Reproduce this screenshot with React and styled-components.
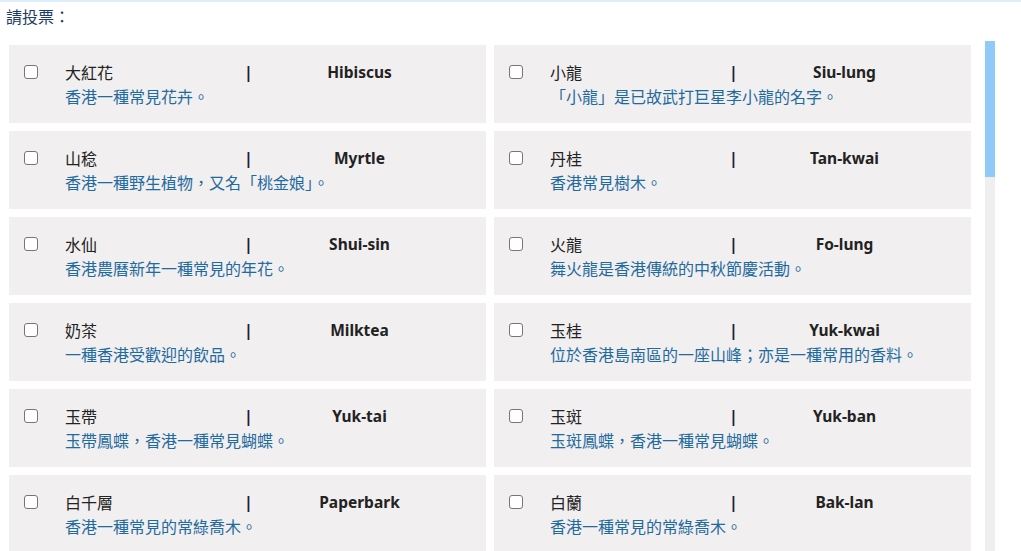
import React from "react"
import styled, { createGlobalStyle } from "styled-components"

const names = [
  ["大紅花", "Hibiscus", "香港一種常見花卉。"],
  ["小龍", "Siu-lung", "「小龍」是已故武打巨星李小龍的名字。"],
  ["山稔", "Myrtle", "香港一種野生植物，又名「桃金娘」。"],
  ["丹桂", "Tan-kwai", "香港常見樹木。"],
  ["水仙", "Shui-sin", "香港農曆新年一種常見的年花。"],
  ["火龍", "Fo-lung", "舞火龍是香港傳統的中秋節慶活動。"],
  ["奶茶", "Milktea", "一種香港受歡迎的飲品。"],
  ["玉桂", "Yuk-kwai", "位於香港島南區的一座山峰；亦是一種常用的香料。"],
  ["玉帶", "Yuk-tai", "玉帶鳳蝶，香港一種常見蝴蝶。"],
  ["玉斑", "Yuk-ban", "玉斑鳳蝶，香港一種常見蝴蝶。"],
  ["白千層", "Paperbark", "香港一種常見的常綠喬木。"],
  ["白蘭", "Bak-lan", "香港一種常見的常綠喬木。"],
  ["石斑", "Shek-pan", "香港一種常見的食用魚類。"],
  ["冬青", "Tung-ching", "香港一種常見的灌木。"],
]

export default function App() {
  return (
    <>
      <GlobalStyle />
      <Page>
        <Heading>請投票：</Heading>
        <Panel>
          <List>
            <Grid>
              {names.map((item) => (
                <Card key={item[1]}>
                  <Check type="checkbox" />
                  <Info>
                    <Name>{item[0]}</Name>
                    <Pipe>|</Pipe>
                    <English>{item[1]}</English>
                    <Desc>{item[2]}</Desc>
                  </Info>
                </Card>
              ))}
            </Grid>
          </List>
          <Track>
            <Thumb />
          </Track>
        </Panel>
      </Page>
    </>
  )
}

const GlobalStyle = createGlobalStyle`
  html, body, #root {
    height: 100%;
    margin: 0;
  }
  body {
    overflow: hidden;
    background: #ffffff;
    font-family: "Noto Sans", "Noto Sans CJK TC", sans-serif;
  }
`

const Page = styled.div`
  height: 100%;
  display: flex;
  flex-direction: column;
  border-top: 2px solid #ddedfa;
  box-sizing: border-box;
`

const Heading = styled.div`
  font-family: "Noto Sans CJK TC", sans-serif;
  font-size: 16px;
  line-height: 24px;
  color: #1e3a66;
  padding: 2px 0 0 6px;
  height: 39px;
  flex-shrink: 0;
  box-sizing: border-box;
`

const Panel = styled.div`
  flex: 1;
  min-height: 0;
  display: flex;
`

const List = styled.div`
  width: 985px;
  overflow: hidden;
`

const Track = styled.div`
  width: 10px;
  background: #f0eeee;
  display: flex;
  flex-direction: column;
`

const Thumb = styled.div`
  height: 136px;
  background: #90caf9;
`

const Grid = styled.div`
  display: grid;
  grid-template-columns: 477px 477px;
  gap: 8px;
  padding: 4px 0 8px 9px;
`

const Card = styled.label`
  display: grid;
  grid-template-columns: 14px 1fr;
  column-gap: 27px;
  align-items: start;
  background: #f1eff0;
  padding: 15px 14px 15px 15px;
  height: 78px;
  box-sizing: border-box;
`

const Check = styled.input`
  appearance: none;
  width: 14px;
  height: 14px;
  margin: 5px 0 0 0;
  border: 1px solid #767676;
  border-radius: 3px;
  background: #ffffff;
  box-sizing: border-box;
`

const Info = styled.div`
  display: grid;
  grid-template-columns: 179px 3px 1fr;
  line-height: 24px;
  font-size: 16px;
`

const Name = styled.span`
  font-family: "Noto Sans CJK TC", sans-serif;
  color: #222222;
`

const Pipe = styled.span`
  font-weight: 700;
  color: #1c1c3a;
`

const English = styled.span`
  font-family: "Noto Sans", sans-serif;
  font-weight: 700;
  font-size: 15.5px;
  color: #222222;
  text-align: center;
`

const Desc = styled.span`
  grid-column: 1 / -1;
  font-family: "Noto Sans CJK TC", sans-serif;
  color: #1f6a9e;
  white-space: nowrap;
`
